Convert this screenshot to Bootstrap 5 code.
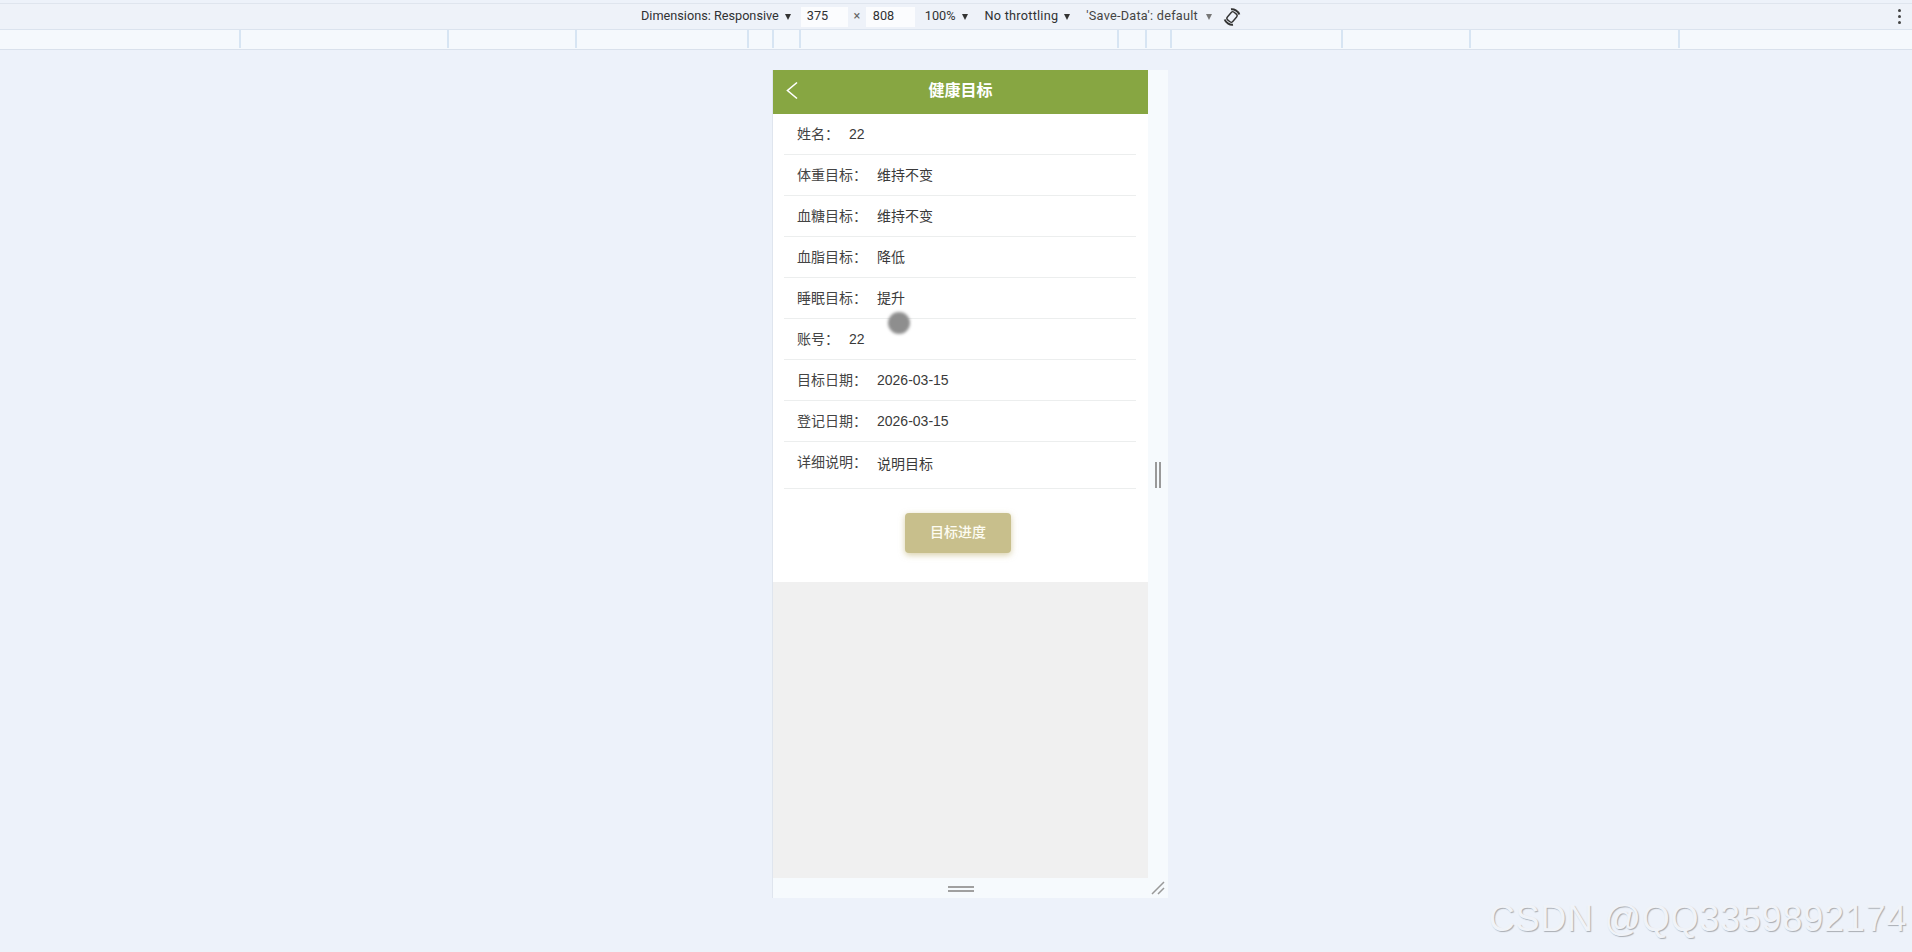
<!DOCTYPE html>
<html lang="zh-CN">
<head>
<meta charset="utf-8">
<title>健康目标</title>
<link href="https://cdn.jsdelivr.net/npm/bootstrap@5.3.0/dist/css/bootstrap.min.css" rel="stylesheet">
<style>
html,body{height:100%;}
body{background:#edf2fa;overflow:hidden;font-family:"Liberation Sans","Noto Sans CJK SC",sans-serif;position:relative;}
.dt-bar{height:27px;margin-top:3px;border-top:1px solid #dfe5ee;border-bottom:1px solid #dbe3ee;padding-left:641px;font:12.7px/1 Roboto,sans-serif;color:#303133;background:#eef2f9;}
.dt-caret{width:0;height:0;border-left:3.5px solid transparent;border-right:3.5px solid transparent;border-top:6px solid #333;margin-left:6px;}
.dt-caret-dim{border-top-color:#777;margin-left:8px;}
.dt-num{height:20px;background:#fbfcfe;padding-left:6px;display:flex;align-items:center;}
.dt-w{width:47px;margin-left:10px;}
.dt-h{width:49px;padding-left:7px;}
.dt-x{color:#666;width:18px;text-align:center;}
.dt-pct{margin-left:10px;}
.dt-thr{margin-left:17px;letter-spacing:.25px;}
.dt-save{margin-left:16px;color:#444;letter-spacing:.25px;}
.dt-rot{margin-left:11px;display:block;}
.dt-kebab{margin-left:auto;margin-right:11px;display:flex;flex-direction:column;gap:3px;}
.dt-kebab i{display:block;width:3px;height:3px;border-radius:50%;background:#444;}
.dt-ruler{height:20px;background:#f5f9fd;border-bottom:1px solid #d9e1ec;display:grid;grid-template-columns:241px 208px 128px 172px 25px 27px 318px 28px 25px 171px 128px 209px 1fr;}
.dt-ruler>div{border-right:2px solid #d7e5f3;margin-bottom:1px;}
.dt-ruler>div:last-child{border-right:0;}
.dt-stage{padding:20px 0 0 772px;}
.dt-device{display:grid;grid-template-columns:375px 20px;grid-template-rows:808px 20px;background:#f6fafd;border-left:1px solid #dfe5ee;width:396px;position:relative;}
.dt-view{background:#f0f0f0;display:flex;flex-direction:column;}
.hg-head{height:44px;padding-bottom:2px;background:#87a642;color:#fff;font-size:16px;font-weight:700;position:relative;}
.hg-back{position:absolute;left:13px;top:11px;}
.hg-body{background:#fff;height:468px;}
.list-group-flush>.hg-row.list-group-item{height:41px;margin:0 12px 0 11px;padding:0 0 0 13px;border:0;border-bottom:1px solid #eceeee;border-radius:0;display:flex;align-items:center;font-size:14px;color:#3a3a3a;background:transparent;}
.hg-row .hg-label{margin-right:10px;color:#444;}
.list-group-flush>.hg-row.hg-tall{height:47px;align-items:flex-start;}
.hg-tall .hg-label{margin-top:10px;}
.hg-tall .hg-val{margin-top:12px;}
.hg-btn.btn{width:106px;height:40px;margin:24px 5px 0 0;padding:0 0 2px;border:0;border-radius:4px;background:#c8bf8c;color:#fdfcf2;font-size:14px;font-weight:500;box-shadow:0 2px 6px rgba(190,175,110,.6);}
.hg-touch{position:absolute;left:115px;top:242px;width:22px;height:22px;border-radius:50%;background:#8e8e8e;filter:blur(1.5px);}
.dt-side{display:flex;align-items:flex-start;justify-content:center;padding-top:392px;gap:2px;}
.dt-side i{display:block;width:2px;height:26px;background:#999;}
.dt-bottom{display:flex;flex-direction:column;align-items:center;gap:2px;padding-top:8px;}
.dt-bottom i{display:block;width:26px;height:2px;background:#a0a0a0;}
.dt-corner{display:block;margin:3px 0 0 3px;}
.hg-mark{position:absolute;right:5px;bottom:15px;font:36px/1 "Liberation Sans",sans-serif;letter-spacing:.75px;color:#f0f3f8;text-shadow:1px 1px 1px #a9adb3;white-space:nowrap;}
</style>
</head>
<body>
<div class="dt-bar d-flex align-items-center">
  <span>Dimensions: Responsive</span><span class="dt-caret"></span>
  <span class="dt-num dt-w">375</span><span class="dt-x">×</span><span class="dt-num dt-h">808</span>
  <span class="dt-pct">100%</span><span class="dt-caret"></span>
  <span class="dt-thr">No throttling</span><span class="dt-caret"></span>
  <span class="dt-save">'Save-Data': default</span><span class="dt-caret dt-caret-dim"></span>
  <svg class="dt-rot" width="18" height="18" viewBox="0 0 18 18" fill="none" stroke="#333" stroke-width="1.400" aria-hidden="true">
    <rect x="5.500" y="4" width="7" height="10" rx="2" transform="rotate(40 9 9)"/>
    <path d="M8 1.200C11 .8 15 2.700 16.300 6.500" stroke-width="2"/><path d="M10 16.800C7 17.200 3 15.300 1.700 11.500" stroke-width="2"/>
  </svg>
  <span class="dt-kebab"><i></i><i></i><i></i></span>
</div>
<div class="dt-ruler"><div></div><div></div><div></div><div></div><div></div><div></div><div></div><div></div><div></div><div></div><div></div><div></div><div></div></div>
<div class="dt-stage">
  <div class="dt-device">
    <div class="dt-view">
      <div class="hg-head d-flex align-items-center justify-content-center">
        <svg class="hg-back" width="12" height="20" viewBox="0 0 12 20" fill="none" stroke="#fff" stroke-width="1.6" aria-hidden="true"><path d="M11 1.500 1.500 9.500 11 17.500"/></svg>
        <span>健康目标</span>
      </div>
      <div class="hg-body">
        <ul class="list-group list-group-flush">
          <li class="list-group-item hg-row"><span class="hg-label">姓名：</span><span class="hg-val">22</span></li>
          <li class="list-group-item hg-row"><span class="hg-label">体重目标：</span><span class="hg-val">维持不变</span></li>
          <li class="list-group-item hg-row"><span class="hg-label">血糖目标：</span><span class="hg-val">维持不变</span></li>
          <li class="list-group-item hg-row"><span class="hg-label">血脂目标：</span><span class="hg-val">降低</span></li>
          <li class="list-group-item hg-row"><span class="hg-label">睡眠目标：</span><span class="hg-val">提升</span></li>
          <li class="list-group-item hg-row"><span class="hg-label">账号：</span><span class="hg-val">22</span></li>
          <li class="list-group-item hg-row"><span class="hg-label">目标日期：</span><span class="hg-val">2026-03-15</span></li>
          <li class="list-group-item hg-row"><span class="hg-label">登记日期：</span><span class="hg-val">2026-03-15</span></li>
          <li class="list-group-item hg-row hg-tall"><span class="hg-label">详细说明：</span><span class="hg-val">说明目标</span></li>
        </ul>
        <div class="text-center"><button type="button" class="btn hg-btn">目标进度</button></div>
      </div>
    </div>
    <div class="dt-side"><i></i><i></i></div>
    <div class="dt-bottom"><i></i><i></i></div>
    <svg class="dt-corner" width="14" height="14" viewBox="0 0 14 14" stroke="#999" stroke-width="1.500" aria-hidden="true"><path d="M1 13 13 1M7 13 13 7"/></svg>
    <span class="hg-touch"></span>
  </div>
</div>
<div class="hg-mark">CSDN @QQ3359892174</div>
<script src="https://cdn.jsdelivr.net/npm/bootstrap@5.3.0/dist/js/bootstrap.bundle.min.js"></script>
</body>
</html>
